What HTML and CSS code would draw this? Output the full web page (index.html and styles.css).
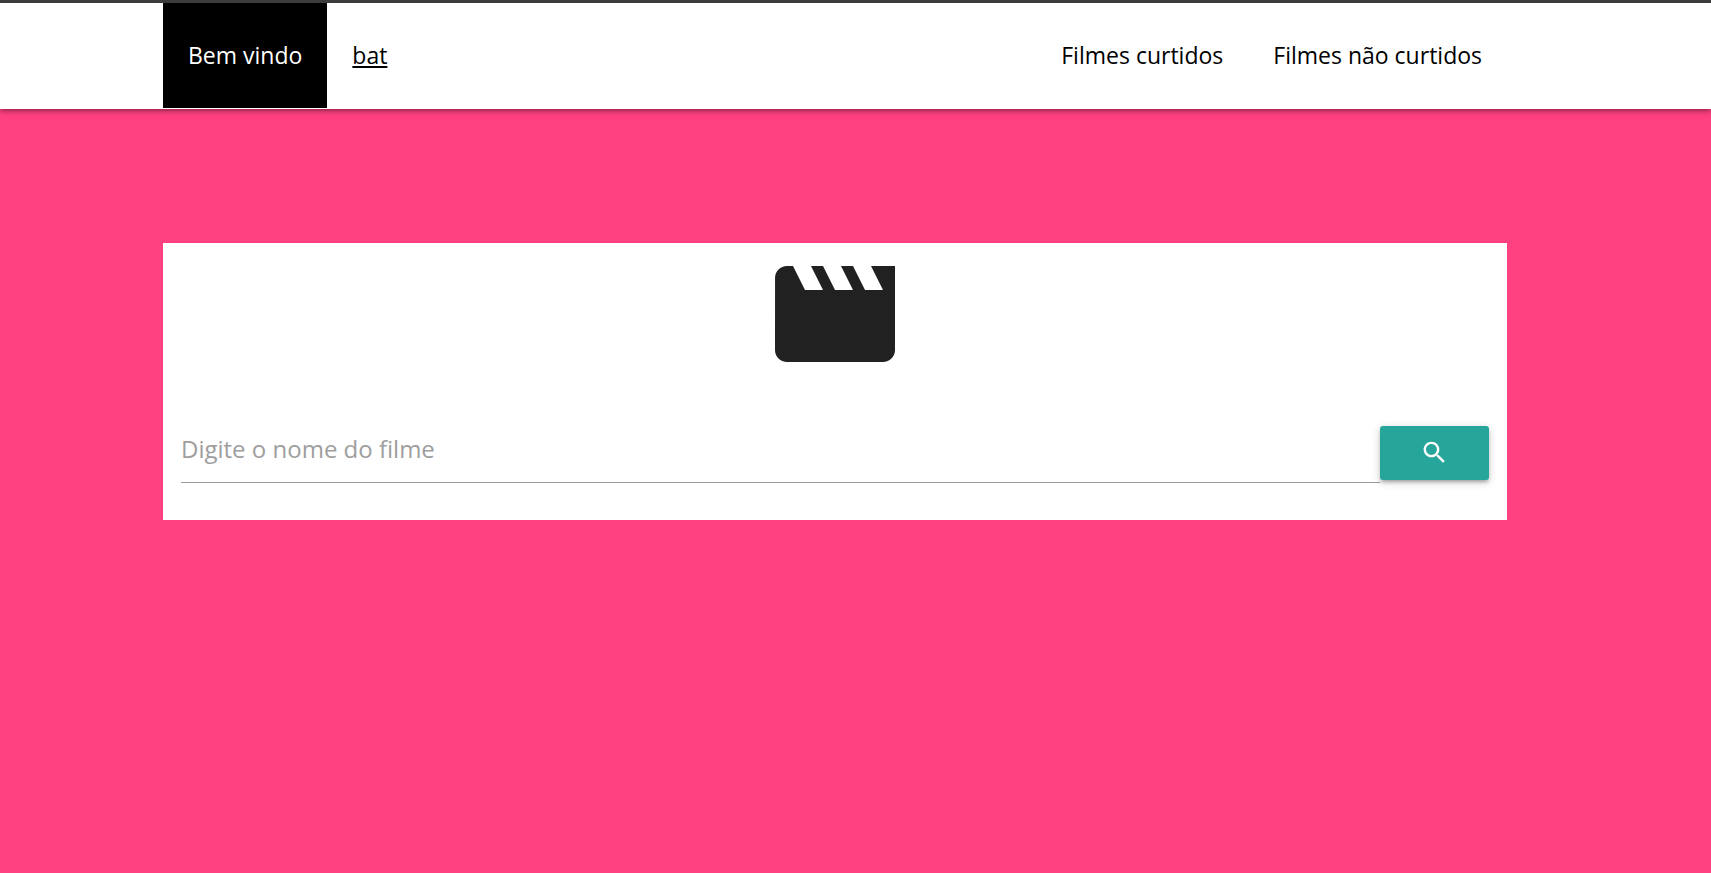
FILE: index.html
```html
<!DOCTYPE html>
<html lang="pt-BR">
<head>
<meta charset="utf-8">
<meta name="viewport" content="width=device-width, initial-scale=1">
<title>Filmes</title>
<link rel="stylesheet" href="styles.css">
</head>
<body>
<header class="navbar">
  <nav class="container nav-row">
    <ul class="nav-list">
      <li class="nav-item nav-active">Bem vindo</li>
      <li><a class="nav-item nav-user" href="#">bat</a></li>
    </ul>
    <ul class="nav-list">
      <li><a class="nav-item" href="#">Filmes curtidos</a></li>
      <li><a class="nav-item" href="#">Filmes não curtidos</a></li>
    </ul>
  </nav>
</header>
<main class="container card">
  <svg class="movie-icon" viewBox="2 4 20 16" aria-hidden="true"><path d="M18 4l2 4h-3l-2-4h-2l2 4h-3l-2-4H8l2 4H7L5 4H4c-1.1 0-1.99.9-1.99 2L2 18c0 1.1.9 2 2 2h16c1.1 0 2-.9 2-2V4h-4z"/></svg>
  <form class="search">
    <input class="search-input" type="text" placeholder="Digite o nome do filme" aria-label="Digite o nome do filme">
    <button class="search-button" type="button" aria-label="Buscar">
      <svg class="search-icon" viewBox="0 0 24 24" aria-hidden="true"><path d="M15.5 14h-.79l-.28-.27C15.41 12.59 16 11.11 16 9.5 16 5.91 13.09 3 9.5 3S3 5.91 3 9.5 5.91 16 9.5 16c1.61 0 3.09-.59 4.23-1.57l.27.28v.79l5 4.99L20.49 19l-4.99-5zm-6 0C7.01 14 5 11.99 5 9.5S7.01 5 9.5 5 14 7.01 14 9.5 11.99 14 9.5 14z"/></svg>
    </button>
  </form>
</main>
</body>
</html>
```
FILE: styles.css
```css
* {
  box-sizing: border-box;
}

body {
  margin: 0;
  background: #ff4081;
  color: #000;
  font-family: "Open Sans", "Noto Sans", sans-serif;
  font-size: 24px;
  padding-right: 41px;
}

.navbar {
  margin-right: -41px;
  padding-right: 41px;
  border-top: 3px solid #3c3c3c;
  background: #fff;
  box-shadow: 0 3px 3px rgba(0, 0, 0, .14), 0 4px 2px -3px rgba(0, 0, 0, .12), 0 2px 8px rgba(0, 0, 0, .2);
}

.container {
  width: 90%;
  max-width: 1344px;
  margin-left: auto;
  margin-right: auto;
}

.nav-row {
  display: flex;
  justify-content: space-between;
  padding-bottom: 1px;
}

.nav-list {
  display: flex;
  margin: 0;
  padding: 0;
  list-style: none;
}

.nav-item {
  display: block;
  padding: 0 25px;
  color: #000;
  font-size: 23px;
  line-height: 105px;
  text-decoration: none;
}

.nav-active {
  background: #000;
  color: #fff;
}

.nav-user {
  text-decoration: underline;
}

.card {
  margin-top: 134px;
  padding: 23px 18px 37px;
  background: #fff;
}

.movie-icon {
  display: block;
  width: 120px;
  margin: 0 auto 53px;
  fill: #212121;
}

.search {
  display: flex;
  align-items: flex-start;
}

.search-input {
  flex: 1;
  min-width: 0;
  height: 68px;
  padding: 0;
  border: 0;
  border-bottom: 1px solid #9e9e9e;
  background: transparent;
  font: inherit;
  outline: none;
}

.search-input::placeholder {
  color: #9e9e9e;
  opacity: 1;
}

.search-button {
  display: flex;
  align-items: center;
  justify-content: center;
  width: 109px;
  height: 54px;
  margin-top: 11px;
  padding: 0 0 2px;
  border: 0;
  border-radius: 3px;
  background: #26a69a;
  box-shadow: 0 3px 3px rgba(0, 0, 0, .14), 0 4px 2px -3px rgba(0, 0, 0, .12), 0 2px 8px rgba(0, 0, 0, .2);
  cursor: pointer;
}

.search-icon {
  width: 29px;
  fill: #fff;
}
```
